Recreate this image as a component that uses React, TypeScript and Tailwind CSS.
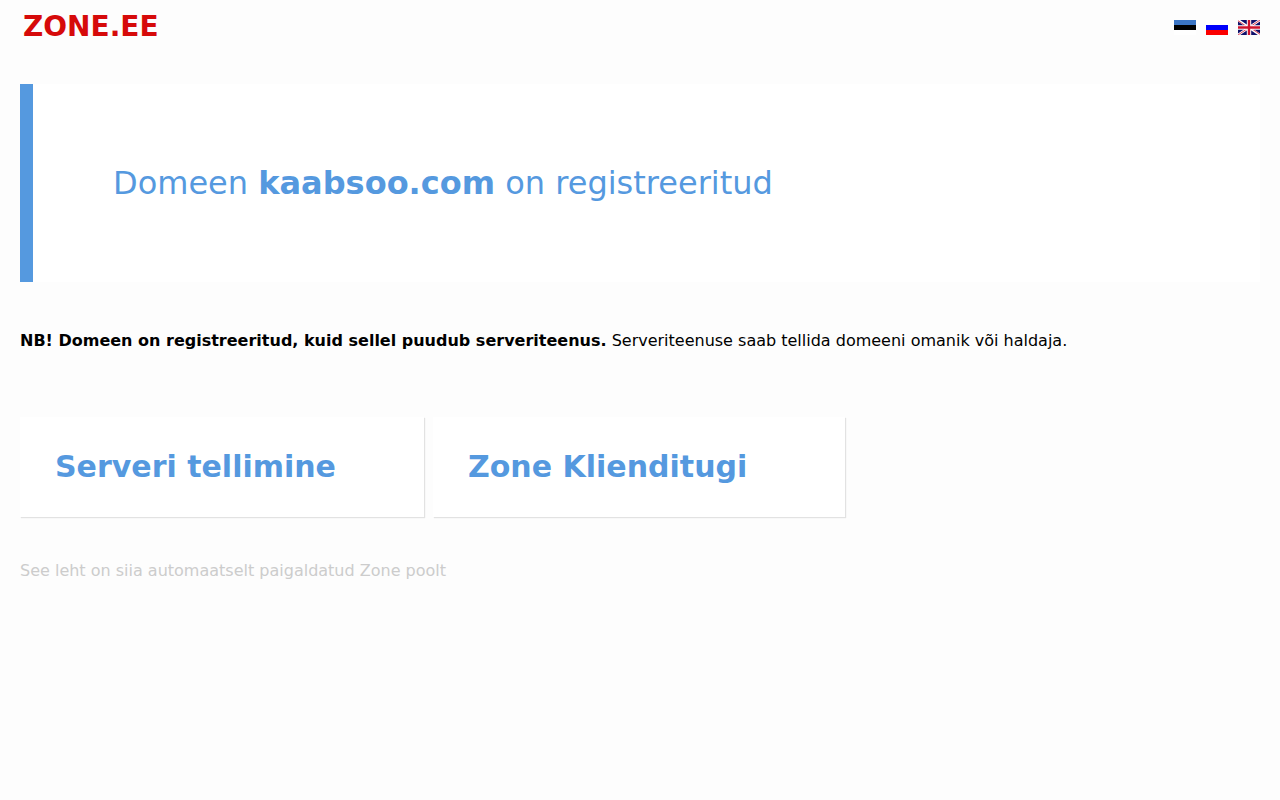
import React from "react";

function EstonianFlag() {
  return (
    <svg viewBox="0 0 22 15" className="block h-[15px] w-[22px]" aria-hidden="true">
      <rect width="22" height="15" fill="#fff" />
      <rect width="22" height="5" fill="#3b75c4" />
      <rect y="5" width="22" height="5" fill="#000" />
    </svg>
  );
}

function RussianFlag() {
  return (
    <svg viewBox="0 0 22 15" className="block h-[15px] w-[22px]" aria-hidden="true">
      <rect width="22" height="15" fill="#fff" />
      <rect y="5" width="22" height="5" fill="#0000fb" />
      <rect y="10" width="22" height="5" fill="#fb0000" />
    </svg>
  );
}

function BritishFlag() {
  return (
    <svg viewBox="0 0 22 15" className="block h-[15px] w-[22px]" aria-hidden="true">
      <rect width="22" height="15" fill="#10106a" />
      <path d="M0 0L22 15M22 0L0 15" stroke="#fff" strokeWidth="2.4" />
      <path d="M0 0.7L10 7.5M12 7.5L22 14.3M22 0L12 6.8M10 8.2L0 15" stroke="#d0132c" strokeWidth="0.8" />
      <path d="M11 0V15M0 7.5H22" stroke="#fff" strokeWidth="4.4" />
      <path d="M11 0V15M0 7.5H22" stroke="#d0132c" strokeWidth="2.4" />
    </svg>
  );
}

const languages = [
  { code: "et", label: "Eesti", Flag: EstonianFlag },
  { code: "ru", label: "Русский", Flag: RussianFlag },
  { code: "en", label: "English", Flag: BritishFlag },
];

const actions = [
  { href: "#tellimine", label: "Serveri tellimine", width: "w-full sm:w-[404px]" },
  { href: "#klienditugi", label: "Zone Klienditugi", width: "w-full sm:w-[412px]" },
];

export default function App() {
  return (
    <div className="min-h-screen bg-[#fdfdfd] px-5 font-['DejaVu_Sans',sans-serif] text-base leading-6 text-black">
      <header className="flex items-start justify-between pt-3">
        <a href="#zone" className="pl-[3px] text-[28px] leading-[30px] font-bold text-[#d60a0a]">
          ZONE.EE
        </a>
        <nav aria-label="Keel" className="flex gap-[10px] pt-2">
          {languages.map(({ code, label, Flag }) => (
            <a key={code} href={"#" + code} aria-label={label}>
              <Flag />
            </a>
          ))}
        </nav>
      </header>

      <main className="pt-[42px]">
        <h1 className="border-l-[13px] border-[#5599df] bg-white px-20 py-20 text-[32px] leading-[38px] text-[#5599df]">
          Domeen <strong className="font-bold">kaabsoo.com</strong> on registreeritud
        </h1>

        <p className="mt-[47px]">
          <strong className="font-bold">NB! Domeen on registreeritud, kuid sellel puudub serveriteenus.</strong>{" "}
          Serveriteenuse saab tellida domeeni omanik või haldaja.
        </p>

        <div className="mt-16 flex flex-wrap gap-[9px]">
          {actions.map(({ href, label, width }) => (
            <a
              key={label}
              href={href}
              className={
                "bg-white py-[30px] pl-[35px] text-[30px] leading-10 font-bold text-[#5599df] shadow-[1px_1px_1px_#e2e2e2] " +
                width
              }
            >
              {label}
            </a>
          ))}
        </div>
      </main>

      <footer className="pt-[42px] text-[#cccccc]">See leht on siia automaatselt paigaldatud Zone poolt</footer>
    </div>
  );
}
